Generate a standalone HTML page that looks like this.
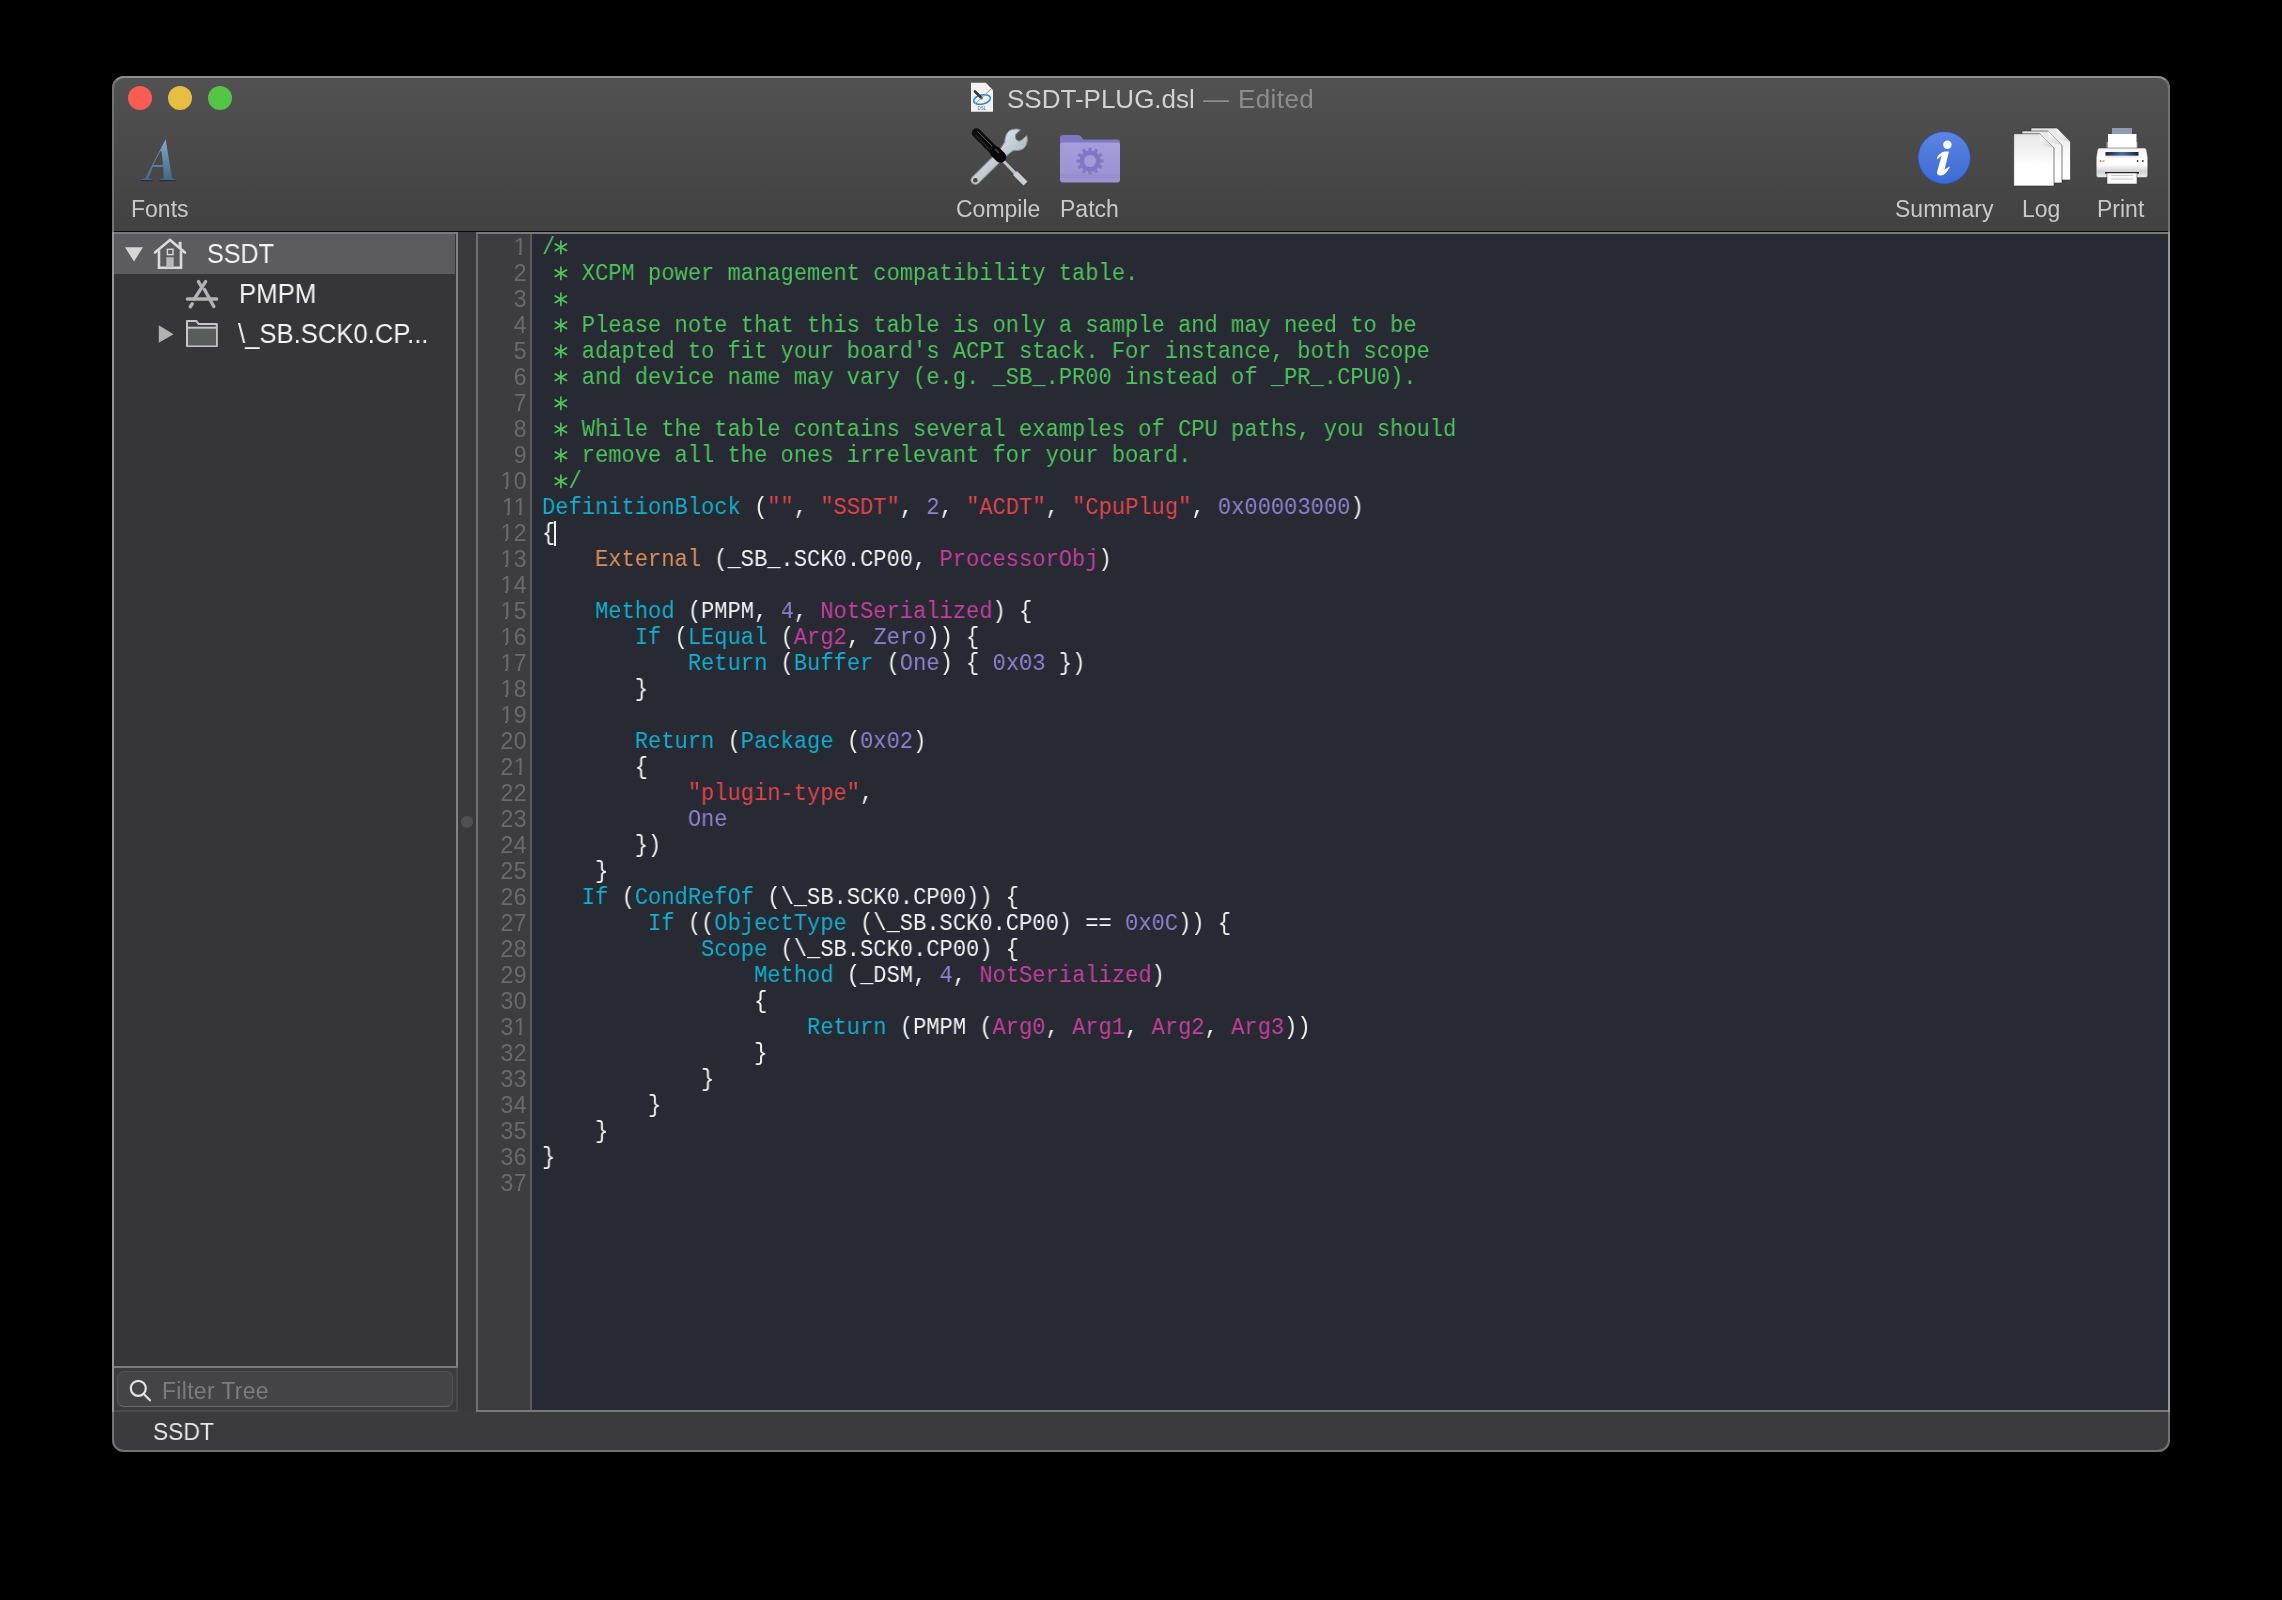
<!DOCTYPE html>
<html><head><meta charset="utf-8">
<style>
html,body{margin:0;padding:0}
body{width:2282px;height:1600px;background:#000;position:relative;overflow:hidden;font-family:"Liberation Sans",sans-serif}
.abs{position:absolute}
.t{will-change:transform}
#win{position:absolute;left:112px;top:76px;width:2058px;height:1376px;border-radius:12px;overflow:hidden;background:#3b3b3d}
#frame{position:absolute;left:112px;top:76px;width:2058px;height:1376px;border-radius:12px;box-sizing:border-box;border:2px solid #727272;border-top-color:#8c8c8c;pointer-events:none}
#toolbar{position:absolute;left:0px;top:0;width:100%;height:155px;background:linear-gradient(#525252,#414141)}
#tbline{position:absolute;left:0;top:154.5px;width:100%;height:1.5px;background:#0c0c0c}
.light{position:absolute;border-radius:50%;width:24px;height:24px;top:10px}
.title{position:absolute;top:82px;font-size:26px;color:#d2d2d2;white-space:pre;line-height:34px;will-change:transform}
.tlabel{position:absolute;top:195px;will-change:transform;font-size:23px;color:#c9c9c9;white-space:pre;line-height:28px}
#sidebar{position:absolute;left:1px;top:156px;width:343px;height:1134px;background:#363638}
#gap{position:absolute;left:346px;top:156px;width:18px;height:1180px;background:#3a3a3c}
#gutter{position:absolute;left:366px;top:158px;width:52px;height:1176px;background:#3d3d3f}
#code{position:absolute;left:420px;top:158px;width:1636px;height:1176px;background:#272a33}
#lnums{position:absolute;will-change:transform;left:365px;top:158px;width:49px;font-size:23px;letter-spacing:0.5px;color:#6a6a6a;text-align:right;line-height:26px}
pre#src{position:absolute;margin:0;left:427px;top:158px;font-family:"Liberation Mono",monospace;font-size:23.5px;line-height:26px;color:#f4f4f4;transform:scaleX(0.9396);transform-origin:0 0;will-change:transform}
.c{color:#4dc65c}.k{color:#0fb1d0}.o{color:#de8f59}.s{color:#e8434b}.n{color:#8c83d0}.m{color:#c93e9f}
.row{position:absolute;left:0;width:343px;height:40px;font-size:26px;color:#f0f0f0;white-space:pre}
</style></head>
<body>
<div id="win">
  <div id="toolbar"></div>
  <div id="tbline"></div>
  <div class="light" style="left:16px;background:#fe5b52"></div>
  <div class="light" style="left:56px;background:#e7bd42"></div>
  <div class="light" style="left:96px;background:#53c443"></div>

  <!-- sidebar -->
  <div id="sidebar"></div>
  <div class="abs" style="left:0;top:156px;width:345px;height:2px;background:#7a7a7a"></div>
  <div class="abs" style="left:344px;top:156px;width:2px;height:1134px;background:#838383"></div>
  <div class="abs" style="left:0;top:158px;width:343px;height:40px;background:#5c5c5e"></div>
  <div class="abs" style="left:0;top:1290px;width:346px;height:2px;background:#7a7a7a"></div>
  <div class="abs" style="left:0;top:1292px;width:344px;height:42px;background:#3a3b3d"></div>
  <div class="abs" style="left:344px;top:1292px;width:2px;height:44px;background:#48494b"></div>
  <div class="abs" style="left:0;top:1334px;width:344px;height:2px;background:#4a4b4d"></div>

  <div id="gap"></div>
  <!-- editor -->
  <div class="abs" style="left:364px;top:156px;width:1694px;height:1180px;background:#7a7a7a"></div>
  <div id="gutter"></div>
  <div class="abs" style="left:418px;top:158px;width:2px;height:1176px;background:#58595a"></div>
  <div class="abs" style="left:364px;top:158px;width:2px;height:1176px;background:#6e6f6f"></div>
  <div id="code"></div>

  <!-- status bar -->
  <div class="abs" style="left:0;top:1336px;width:100%;height:40px;background:#3b3b3d"></div>
</div>
<div id="frame"></div>

<!-- title -->
<div class="title" style="left:1007px">SSDT-PLUG.dsl</div>
<div class="title" style="left:1203px;color:#8d8d8d">—</div>
<div class="title" style="left:1238px;color:#8d8d8d;letter-spacing:0.4px">Edited</div>

<!-- toolbar labels -->
<div class="tlabel" style="left:131px">Fonts</div>
<div class="tlabel" style="left:956px">Compile</div>
<div class="tlabel" style="left:1060px">Patch</div>
<div class="tlabel" style="left:1895px">Summary</div>
<div class="tlabel" style="left:2022px">Log</div>
<div class="tlabel" style="left:2097px">Print</div>

<!-- sidebar rows -->
<div class="abs t" style="left:207px;top:236.5px;font-size:27px;color:#f4f4f4;line-height:34px;transform:scaleX(0.93);transform-origin:0 0">SSDT</div>
<div class="abs t" style="left:239px;top:276.5px;font-size:27px;color:#f4f4f4;line-height:34px;transform:scaleX(0.955);transform-origin:0 0">PMPM</div>
<div class="abs t" style="left:238px;top:317px;font-size:27px;color:#f4f4f4;line-height:34px;transform:scaleX(0.95);transform-origin:0 0">\_SB.SCK0.CP...</div>

<!-- filter -->
<div class="abs" style="left:117px;top:1371px;width:336px;height:36px;box-sizing:border-box;border:1px solid #545456;border-bottom:1.5px solid #6a6a6b;border-radius:7px;background:#444446"></div>
<div class="abs t" style="left:161.5px;top:1377px;font-size:23px;color:#7c7c7c;line-height:28px;letter-spacing:0.3px">Filter Tree</div>
<div class="abs t" style="left:153px;top:1418px;font-size:24.5px;color:#e6e6e6;line-height:28px;transform:scaleX(0.93);transform-origin:0 0">SSDT</div>

<!-- line numbers -->
<div id="lnums" style="left:478px;top:234px">1<br>2<br>3<br>4<br>5<br>6<br>7<br>8<br>9<br>10<br>11<br>12<br>13<br>14<br>15<br>16<br>17<br>18<br>19<br>20<br>21<br>22<br>23<br>24<br>25<br>26<br>27<br>28<br>29<br>30<br>31<br>32<br>33<br>34<br>35<br>36<br>37</div>

<pre id="src" style="left:542px;top:235px"><span class="c">/ 
   XCPM power management compatibility table.
  
   Please note that this table is only a sample and may need to be
   adapted to fit your board's ACPI stack. For instance, both scope
   and device name may vary (e.g. _SB_.PR00 instead of _PR_.CPU0).
  
   While the table contains several examples of CPU paths, you should
   remove all the ones irrelevant for your board.
  /</span>
<span class="k">DefinitionBlock</span> (<span class="s">""</span>, <span class="s">"SSDT"</span>, <span class="n">2</span>, <span class="s">"ACDT"</span>, <span class="s">"CpuPlug"</span>, <span class="n">0x00003000</span>)
{
    <span class="o">External</span> (_SB_.SCK0.CP00, <span class="m">ProcessorObj</span>)

    <span class="k">Method</span> (PMPM, <span class="n">4</span>, <span class="m">NotSerialized</span>) {
       <span class="k">If</span> (<span class="k">LEqual</span> (<span class="m">Arg2</span>, <span class="n">Zero</span>)) {
           <span class="k">Return</span> (<span class="k">Buffer</span> (<span class="n">One</span>) { <span class="n">0x03</span> })
       }

       <span class="k">Return</span> (<span class="k">Package</span> (<span class="n">0x02</span>)
       {
           <span class="s">"plugin-type"</span>,
           <span class="n">One</span>
       })
    }
   <span class="k">If</span> (<span class="k">CondRefOf</span> (\_SB.SCK0.CP00)) {
        <span class="k">If</span> ((<span class="k">ObjectType</span> (\_SB.SCK0.CP00) == <span class="n">0x0C</span>)) {
            <span class="k">Scope</span> (\_SB.SCK0.CP00) {
                <span class="k">Method</span> (_DSM, <span class="n">4</span>, <span class="m">NotSerialized</span>)
                {
                    <span class="k">Return</span> (PMPM (<span class="m">Arg0</span>, <span class="m">Arg1</span>, <span class="m">Arg2</span>, <span class="m">Arg3</span>))
                }
            }
        }
    }
}
</pre>
<svg id="ov" width="2282" height="1600" viewBox="0 0 2282 1600" style="position:absolute;left:0;top:0">
<defs>

 <linearGradient id="gA" gradientUnits="userSpaceOnUse" x1="0" y1="139" x2="0" y2="180"><stop offset="0" stop-color="#86a8c6"/><stop offset="1" stop-color="#406889"/></linearGradient>
 <linearGradient id="gInfo" x1="0" y1="0" x2="0" y2="1"><stop offset="0" stop-color="#5d85e0"/><stop offset="1" stop-color="#3c6ad6"/></linearGradient>
 <linearGradient id="gPage" x1="0" y1="0" x2="0" y2="1"><stop offset="0" stop-color="#e6e6e6"/><stop offset="0.6" stop-color="#fdfdfd"/><stop offset="1" stop-color="#ffffff"/></linearGradient>
 <linearGradient id="gFold" x1="0" y1="0" x2="1" y2="1"><stop offset="0" stop-color="#ffffff"/><stop offset="1" stop-color="#d0d0d0"/></linearGradient>
 <linearGradient id="gPrn" x1="0" y1="0" x2="0" y2="1"><stop offset="0" stop-color="#f4f4f4"/><stop offset="0.55" stop-color="#ffffff"/><stop offset="0.8" stop-color="#cfd0d2"/><stop offset="1" stop-color="#f0f0f0"/></linearGradient>
 <linearGradient id="gSlot" x1="0" y1="0" x2="1" y2="0"><stop offset="0" stop-color="#1a2230"/><stop offset="0.5" stop-color="#50709c"/><stop offset="1" stop-color="#1a2230"/></linearGradient>
 <linearGradient id="gWr" x1="0" y1="0" x2="1" y2="1"><stop offset="0" stop-color="#dde7ee"/><stop offset="1" stop-color="#a9b3b9"/></linearGradient>
 <linearGradient id="gFolder" x1="0" y1="0" x2="0" y2="1"><stop offset="0" stop-color="#a69edb"/><stop offset="1" stop-color="#9a90d2"/></linearGradient>
</defs>
<g transform="translate(560.88,247.3)" stroke="#4dc65c" stroke-width="1.7" stroke-linecap="round"><line x1="0" y1="-6.2" x2="0" y2="6.2"/><line x1="-5.6" y1="-3.3" x2="5.6" y2="3.3"/><line x1="-5.6" y1="3.3" x2="5.6" y2="-3.3"/></g>
<g transform="translate(560.88,273.3)" stroke="#4dc65c" stroke-width="1.7" stroke-linecap="round"><line x1="0" y1="-6.2" x2="0" y2="6.2"/><line x1="-5.6" y1="-3.3" x2="5.6" y2="3.3"/><line x1="-5.6" y1="3.3" x2="5.6" y2="-3.3"/></g>
<g transform="translate(560.88,299.3)" stroke="#4dc65c" stroke-width="1.7" stroke-linecap="round"><line x1="0" y1="-6.2" x2="0" y2="6.2"/><line x1="-5.6" y1="-3.3" x2="5.6" y2="3.3"/><line x1="-5.6" y1="3.3" x2="5.6" y2="-3.3"/></g>
<g transform="translate(560.88,325.3)" stroke="#4dc65c" stroke-width="1.7" stroke-linecap="round"><line x1="0" y1="-6.2" x2="0" y2="6.2"/><line x1="-5.6" y1="-3.3" x2="5.6" y2="3.3"/><line x1="-5.6" y1="3.3" x2="5.6" y2="-3.3"/></g>
<g transform="translate(560.88,351.3)" stroke="#4dc65c" stroke-width="1.7" stroke-linecap="round"><line x1="0" y1="-6.2" x2="0" y2="6.2"/><line x1="-5.6" y1="-3.3" x2="5.6" y2="3.3"/><line x1="-5.6" y1="3.3" x2="5.6" y2="-3.3"/></g>
<g transform="translate(560.88,377.3)" stroke="#4dc65c" stroke-width="1.7" stroke-linecap="round"><line x1="0" y1="-6.2" x2="0" y2="6.2"/><line x1="-5.6" y1="-3.3" x2="5.6" y2="3.3"/><line x1="-5.6" y1="3.3" x2="5.6" y2="-3.3"/></g>
<g transform="translate(560.88,403.3)" stroke="#4dc65c" stroke-width="1.7" stroke-linecap="round"><line x1="0" y1="-6.2" x2="0" y2="6.2"/><line x1="-5.6" y1="-3.3" x2="5.6" y2="3.3"/><line x1="-5.6" y1="3.3" x2="5.6" y2="-3.3"/></g>
<g transform="translate(560.88,429.3)" stroke="#4dc65c" stroke-width="1.7" stroke-linecap="round"><line x1="0" y1="-6.2" x2="0" y2="6.2"/><line x1="-5.6" y1="-3.3" x2="5.6" y2="3.3"/><line x1="-5.6" y1="3.3" x2="5.6" y2="-3.3"/></g>
<g transform="translate(560.88,455.3)" stroke="#4dc65c" stroke-width="1.7" stroke-linecap="round"><line x1="0" y1="-6.2" x2="0" y2="6.2"/><line x1="-5.6" y1="-3.3" x2="5.6" y2="3.3"/><line x1="-5.6" y1="3.3" x2="5.6" y2="-3.3"/></g>
<g transform="translate(560.88,481.3)" stroke="#4dc65c" stroke-width="1.7" stroke-linecap="round"><line x1="0" y1="-6.2" x2="0" y2="6.2"/><line x1="-5.6" y1="-3.3" x2="5.6" y2="3.3"/><line x1="-5.6" y1="3.3" x2="5.6" y2="-3.3"/></g>
<!-- Fonts A -->
<path d="M141,180.6 L152.6,180.6 M159.6,180.6 L175.8,180.6" stroke="#262626" stroke-width="1.3" opacity="0.7"/>
<path fill-rule="evenodd" fill="url(#gA)" d="M165.66,139.2 L172,177.9 Q173,178.8 175.1,179 L175.1,179.9 L160.2,179.9 L160.2,179 Q163,178.8 163.7,177.9 L163.25,167 L152.75,167 L148.8,177.9 Q149.5,178.8 152.1,179 L152.1,179.9 L141.8,179.9 L141.8,179 Q144.5,178.8 145.3,177.9 Z M153.2,165 L163,165 L161.5,151.25 L160.2,151.25 Z"/>

<!-- Compile: wrench -->
<g stroke-linecap="round">
 <line x1="975.5" y1="180" x2="1009" y2="147" stroke="#7e8c94" stroke-width="10"/>
 <line x1="975.5" y1="180" x2="1009" y2="147" stroke="url(#gWr)" stroke-width="8"/>
 <path d="M1004.8,141.5 C1005,136 1007,131 1012,129.5 C1015,128.7 1018,128.8 1020.5,129.8 L1015.8,134.5 C1014.8,137.5 1016,140.5 1018.5,141 C1020.5,141.3 1022,140 1022.8,139 L1026.7,135.5 C1028,139.5 1027.5,144 1024.5,147.5 C1022.5,149.8 1019.5,150.5 1017,150.5 L1013,150.7 L1006,156 L1000,150 Z" fill="url(#gWr)" stroke="#7e8c94" stroke-width="1" stroke-linejoin="round"/>
 <circle cx="975.3" cy="180.3" r="2.3" fill="#474747"/>
</g>
<!-- screwdriver -->
<g stroke-linecap="round">
 <line x1="1001" y1="158.5" x2="1015" y2="173" stroke="#b9c3c8" stroke-width="3.2"/>
 <line x1="1015" y1="173" x2="1025.5" y2="183.5" stroke="#c9d0d4" stroke-width="5.5" stroke-linecap="butt"/>
 <line x1="976.5" y1="133" x2="993" y2="149.5" stroke="#0d0d0d" stroke-width="9.5"/>
 <line x1="977.5" y1="131.5" x2="992" y2="146" stroke="#5a5a5a" stroke-width="1" stroke-linecap="butt"/>
 <line x1="975.5" y1="135" x2="990" y2="149.5" stroke="#3a3a3a" stroke-width="0.8" stroke-linecap="butt"/>
 <line x1="995.5" y1="152" x2="1000.5" y2="157" stroke="#080808" stroke-width="11.5"/>
 <line x1="995" y1="149" x2="999" y2="153" stroke="#4a4a4a" stroke-width="1.2" stroke-linecap="butt"/>
</g>

<!-- Patch folder -->
<path d="M1060,138 Q1060,135 1063,135 L1078,135 Q1080,135 1081.5,137 L1083,139.5 L1117,139.5 Q1120,139.5 1120,142.5 L1120,150 L1060,150 Z" fill="#7f77c2"/>
<path d="M1060,145.5 Q1060,142.5 1063,142.5 L1117,142.5 Q1120,142.5 1120,145.5 L1120,179.5 Q1120,182.5 1117,182.5 L1063,182.5 Q1060,182.5 1060,179.5 Z" fill="url(#gFolder)"/>
<line x1="1060" y1="175" x2="1120" y2="175" stroke="#9188cc" stroke-width="0.8"/>
<line x1="1060" y1="177.5" x2="1120" y2="177.5" stroke="#9188cc" stroke-width="0.8"/>
<g transform="translate(1090,161)" fill="#8177c4">
 <circle r="10.5"/>
 <g id="teeth">
  <rect x="-1.6" y="-13.6" width="3.2" height="5" rx="0.8"/>
  <rect x="-1.6" y="-13.6" width="3.2" height="5" rx="0.8" transform="rotate(30)"/>
  <rect x="-1.6" y="-13.6" width="3.2" height="5" rx="0.8" transform="rotate(60)"/>
  <rect x="-1.6" y="-13.6" width="3.2" height="5" rx="0.8" transform="rotate(90)"/>
  <rect x="-1.6" y="-13.6" width="3.2" height="5" rx="0.8" transform="rotate(120)"/>
  <rect x="-1.6" y="-13.6" width="3.2" height="5" rx="0.8" transform="rotate(150)"/>
  <rect x="-1.6" y="-13.6" width="3.2" height="5" rx="0.8" transform="rotate(180)"/>
  <rect x="-1.6" y="-13.6" width="3.2" height="5" rx="0.8" transform="rotate(210)"/>
  <rect x="-1.6" y="-13.6" width="3.2" height="5" rx="0.8" transform="rotate(240)"/>
  <rect x="-1.6" y="-13.6" width="3.2" height="5" rx="0.8" transform="rotate(270)"/>
  <rect x="-1.6" y="-13.6" width="3.2" height="5" rx="0.8" transform="rotate(300)"/>
  <rect x="-1.6" y="-13.6" width="3.2" height="5" rx="0.8" transform="rotate(330)"/>
 </g>
 <circle r="6" fill="#a49cda"/>
</g>

<!-- Summary info -->
<circle cx="1944.2" cy="157.6" r="26.4" fill="#2c58c8"/>
<circle cx="1944.2" cy="157.6" r="25.6" fill="url(#gInfo)"/>
<circle cx="1947.4" cy="144.8" r="4.2" fill="#fff"/>
<path d="M1937,157.5 C1939,154 1942,151.5 1945,151.5 L1949,151.5 L1944.5,169.5 C1946.5,168.5 1948.5,167 1950,166.5 C1948,171 1945,175.5 1940.5,175.5 C1938,175.5 1936.5,174 1937.3,171 L1941.5,156 C1940,156.5 1938.5,158 1937.5,159.5 Z" fill="#fff"/>

<!-- Log pages -->
<g>
 <path d="M2031,128 L2056.5,128 L2070.5,142 L2070.5,180 L2031,180 Z" fill="url(#gPage)" stroke="#2a2a2a" stroke-width="0.6"/>
 <path d="M2056.5,128 L2070.5,142 L2058,139 Z" fill="url(#gFold)"/>
 <path d="M2022,131 L2048,131 L2062,145 L2062,183 L2022,183 Z" fill="url(#gPage)" stroke="#2a2a2a" stroke-width="0.6"/>
 <path d="M2048,131 L2062,145 L2049.5,142 Z" fill="url(#gFold)"/>
 <path d="M2013.7,133.7 L2039.5,133.7 L2054,148 L2054,186 L2013.7,186 Z" fill="url(#gPage)" stroke="#2a2a2a" stroke-width="0.6"/>
 <path d="M2039.5,133.7 L2054,148 L2041,145 Z" fill="url(#gFold)"/>
</g>

<!-- Print -->
<g>
 <rect x="2112" y="128" width="20" height="6" fill="#8d9bb5"/>
 <rect x="2106.5" y="142" width="31" height="11" fill="#9aa6bb"/>
 <rect x="2108" y="134" width="28.5" height="18" fill="#ffffff"/>
 <path d="M2099.5,148 L2144.5,148 Q2146,148 2146.6,150 L2147.8,157.5 L2147.8,175 Q2147.8,177.6 2145,177.6 L2099,177.6 Q2096.2,177.6 2096.2,175 L2096.2,157.5 L2097.4,150 Q2098,148 2099.5,148 Z" fill="url(#gPrn)" stroke="#3a3a3a" stroke-width="0.5"/>
 <rect x="2105.5" y="152" width="33" height="3.8" fill="url(#gSlot)"/>
 <rect x="2105" y="155.8" width="34" height="1.6" fill="#e8e8e8"/>
 <circle cx="2100.6" cy="161" r="0.9" fill="#f06040"/>
 <circle cx="2103.6" cy="161" r="0.9" fill="#f0a030"/>
 <circle cx="2137.6" cy="161" r="0.9" fill="#333"/>
 <circle cx="2142.8" cy="161" r="0.9" fill="#333"/>
 <rect x="2105" y="172" width="34" height="1.6" fill="#222"/>
 <rect x="2107" y="173" width="30" height="11" fill="#fbfbfb" stroke="#333" stroke-width="0.5"/>
 <rect x="2111" y="175" width="22" height="1" fill="#ccc"/>
 <rect x="2111" y="178.5" width="22" height="1" fill="#ccc"/>
</g>

<!-- title doc icon -->
<g>
 <path d="M971,82.8 L985.6,82.8 L993,90.5 L993,111.7 L971,111.7 Z" fill="#f2f2f2"/>
 <path d="M985.6,82.8 L993,90.5 L986.5,89.5 Z" fill="#ffffff" stroke="#bbb" stroke-width="0.4"/>
 <ellipse cx="982" cy="99.5" rx="8.5" ry="4.6" fill="none" stroke="#2a86d2" stroke-width="1.5" transform="rotate(-12 982 99.5)"/>
 <line x1="975" y1="91.5" x2="981.5" y2="98" stroke="#333" stroke-width="2.6" stroke-linecap="round"/>
 <line x1="981.5" y1="98" x2="991" y2="89" stroke="#9a9a9a" stroke-width="1"/>
 <line x1="981.5" y1="98" x2="975" y2="104" stroke="#9a9a9a" stroke-width="1"/>
 <text x="982" y="110" font-family="Liberation Sans" font-size="4.5" fill="#666" text-anchor="middle">DSL</text>
</g>

<!-- sidebar icons -->
<path d="M125,247.2 L143,247.2 L134,261.6 Z" fill="#d6d6d6"/>
<g fill="none" stroke="#dadada" stroke-width="2.6">
 <path d="M155,252.5 L170,240 L185,252.5" stroke-linecap="round"/>
 <path d="M159,250.5 L159,267.8 L181,267.8 L181,250.5"/>
 <rect x="167.4" y="249.3" width="5.6" height="5.3" stroke-width="1.4"/>
</g>
<rect x="178.6" y="241.8" width="3" height="6.5" fill="#dadada"/>
<rect x="166.3" y="257.3" width="7.4" height="10" fill="#b8b8b8"/>

<g stroke="#b3b3b3" stroke-width="3.4" stroke-linecap="round">
 <line x1="205.6" y1="281.6" x2="194.3" y2="299"/>
 <line x1="192.3" y1="303.8" x2="190.3" y2="306.8"/>
 <line x1="198.4" y1="281.6" x2="201" y2="285.8"/>
 <line x1="204.5" y1="289.5" x2="213.8" y2="306.5"/>
 <line x1="187.4" y1="299" x2="216.6" y2="299"/>
</g>

<path d="M158.8,325.2 L158.8,342.8 L173.6,334.2 Z" fill="#b2b2b2"/>
<path d="M187,321 L196.5,321 L198.5,324 L216.8,324 L216.8,346 L187,346 Z" fill="#414243" stroke="#c6c6c6" stroke-width="2" stroke-linejoin="round"/>
<rect x="188" y="328.5" width="28" height="17" fill="#5a5b5b"/>
<line x1="187" y1="327.7" x2="216.8" y2="327.7" stroke="#c6c6c6" stroke-width="2"/>

<!-- line number 1 foot removal -->
<g fill="#3d3d3f"><rect x="514" y="253" width="5" height="2"/><rect x="521.5" y="253" width="5.5" height="2"/><rect x="500" y="487" width="5" height="2"/><rect x="507.5" y="487" width="5.5" height="2"/><rect x="502" y="513" width="5" height="2"/><rect x="509.5" y="513" width="5.5" height="2"/><rect x="514" y="513" width="5" height="2"/><rect x="521.5" y="513" width="5.5" height="2"/><rect x="500" y="539" width="5" height="2"/><rect x="507.5" y="539" width="5.5" height="2"/><rect x="500" y="565" width="5" height="2"/><rect x="507.5" y="565" width="5.5" height="2"/><rect x="500" y="591" width="5" height="2"/><rect x="507.5" y="591" width="5.5" height="2"/><rect x="500" y="617" width="5" height="2"/><rect x="507.5" y="617" width="5.5" height="2"/><rect x="500" y="643" width="5" height="2"/><rect x="507.5" y="643" width="5.5" height="2"/><rect x="500" y="669" width="5" height="2"/><rect x="507.5" y="669" width="5.5" height="2"/><rect x="500" y="695" width="5" height="2"/><rect x="507.5" y="695" width="5.5" height="2"/><rect x="500" y="721" width="5" height="2"/><rect x="507.5" y="721" width="5.5" height="2"/><rect x="514" y="773" width="5" height="2"/><rect x="521.5" y="773" width="5.5" height="2"/><rect x="514" y="1033" width="5" height="2"/><rect x="521.5" y="1033" width="5.5" height="2"/></g>
<!-- search icon -->
<circle cx="138.3" cy="1388.3" r="7.5" fill="none" stroke="#e2e2e2" stroke-width="2.2"/>
<line x1="143.9" y1="1394.2" x2="150" y2="1400.3" stroke="#e2e2e2" stroke-width="2.2" stroke-linecap="round"/>
</svg>

<div class="abs" style="left:112px;top:232px;width:2px;height:1180px;background:#959595"></div>
<div class="abs" style="left:2168px;top:232px;width:2px;height:1180px;background:#979797"></div>
<div class="abs" style="left:461px;top:816px;width:12px;height:12px;border-radius:50%;background:#505053"></div>
<!-- cursor -->
<div class="abs" style="left:554px;top:521px;width:2px;height:25px;background:#f0f0f0"></div>

</body></html>
